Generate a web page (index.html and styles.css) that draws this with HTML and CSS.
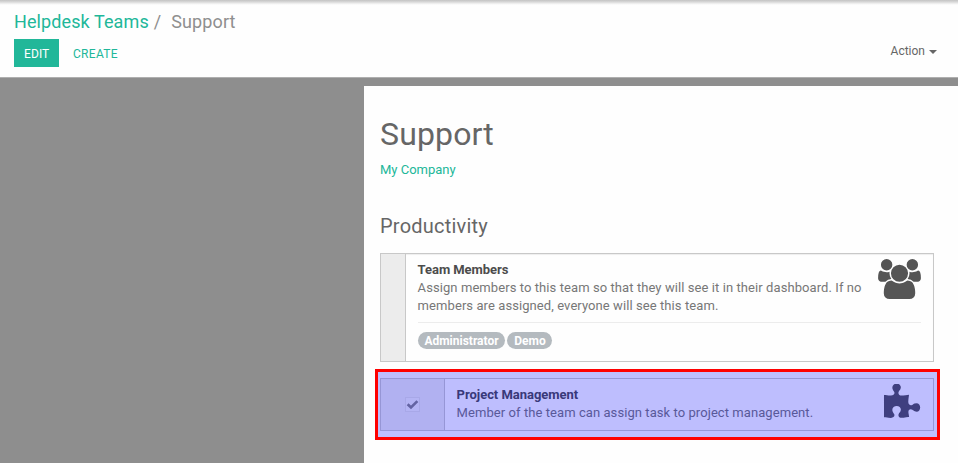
FILE: index.html
```html
<!DOCTYPE html>
<html lang="en">
<head>
<meta charset="utf-8">
<title>Support - Helpdesk Teams</title>
<link rel="stylesheet" href="styles.css">
</head>
<body>
<header class="control-panel">
  <nav class="breadcrumb"><a href="#">Helpdesk Teams</a><span class="sep">/</span><span>Support</span></nav>
  <div class="toolbar">
    <div class="buttons">
      <button class="btn btn-primary">EDIT</button>
      <button class="btn btn-link">CREATE</button>
    </div>
    <button class="action">Action<span class="caret"></span></button>
  </div>
</header>
<main class="content">
  <section class="sheet">
    <h1>Support</h1>
    <a class="company" href="#">My Company</a>
    <h2>Productivity</h2>
    <article class="setting setting-members">
      <div class="setting-left"></div>
      <div class="setting-right">
        <div class="setting-head">
          <div class="setting-text">
            <h3>Team Members</h3>
            <p>Assign members to this team so that they will see it in their dashboard. If no members are assigned, everyone will see this team.</p>
          </div>
          <svg class="icon-users" viewBox="0 0 1920 1792" aria-hidden="true"><path d="M593 896q-162 5-265 128h-134q-82 0-138-40.500t-56-118.500q0-353 124-353 6 0 43.500 21t97.500 42.500 119 21.500q67 0 133-23-5 37-5 66 0 139 81 256zm1071 637q0 120-73 189.500t-194 69.500h-874q-121 0-194-69.500t-73-189.500q0-53 3.500-103.500t14-109 26.500-108.500 43-97.500 62-81 85.500-53.500 111.500-20q10 0 43 21.500t73 48 107 48 135 21.500 135-21.500 107-48 73-48 43-21.500q61 0 111.500 20t85.500 53.500 62 81 43 97.500 26.500 108.500 14 109 3.500 103.500zm-1024-1277q0 106-75 181t-181 75-181-75-75-181 75-181 181-75 181 75 75 181zm704 384q0 159-112.500 271.500t-271.500 112.500-271.500-112.500-112.500-271.500 112.500-271.500 271.500-112.500 271.500 112.500 112.500 271.500zm576 225q0 78-56 118.500t-138 40.500h-134q-103-123-265-128 81-117 81-256 0-29-5-66 66 23 133 23 59 0 119-21.500t97.500-42.500 43.500-21q124 0 124 353zm-128-609q0 106-75 181t-181 75-181-75-75-181 75-181 181-75 181 75 75 181z"/></svg>
        </div>
        <div class="tags"><span class="tag">Administrator</span><span class="tag">Demo</span></div>
      </div>
    </article>
    <div class="highlight">
      <article class="setting setting-project">
        <div class="setting-left">
          <span class="checkbox"><svg viewBox="0 0 12 12" aria-hidden="true"><path d="M1.500 5.800 4.600 8.700 10.500 2.900"/></svg></span>
        </div>
        <div class="setting-right">
          <div class="setting-head">
            <div class="setting-text">
              <h3>Project Management</h3>
              <p>Member of the team can assign task to project management.</p>
            </div>
            <svg class="icon-puzzle" viewBox="0 0 1792 1792" aria-hidden="true"><path d="M1755 1083q0 81-44.500 135t-123.500 54q-41 0-77.500-17.500t-59-38-56.500-38-71-17.500q-110 0-110 124 0 39 16 115t15 115v5q-22 0-33 1-34 3-97.500 11.500t-115.500 13.500-98 5q-61 0-103-26.500t-42-83.500q0-37 17.500-71t38-56.500 38-59 17.500-77.500q0-79-54-123.500t-135-44.500q-84 0-143 45.500t-59 127.500q0 43 15 83t33.500 64.500 33.500 53 15 50.500q0 45-46 89-37 35-117 35-95 0-245-24-9-2-27.500-4t-27.500-4l-13-2q-1 0-3-1-2 0-2-1v-1024q2 1 17.500 3.500t34 5 21.500 3.500q150 24 245 24 80 0 117-35 46-44 46-89 0-22-15-50.500t-33.500-53-33.500-64.500-15-83q0-82 59-127.500t144-45.500q80 0 134 44.500t54 123.500q0 41-17.500 77.500t-38 59-38 56.500-17.500 71q0 57 42 83.500t103 26.500q64 0 180-15t163-17v2q-1 2-3.500 17.500t-5 34-3.500 21.500q-24 150-24 245 0 80 35 117 44 46 89 46 22 0 50.500-15t53-33.500 64.500-33.500 83-15q82 0 127.500 59t45.500 143z"/></svg>
          </div>
        </div>
      </article>
    </div>
  </section>
</main>
</body>
</html>
```
FILE: styles.css
```css
* { box-sizing: border-box; }
body {
  margin: 0;
  height: 463px;
  overflow: hidden;
  display: flex;
  flex-direction: column;
  background: #8e8e8e;
  color: #666;
  font: 13px/18px Roboto, "Liberation Sans", sans-serif;
}
h1, h2, h3, p { margin: 0; }
a { color: #21b799; text-decoration: none; }
button { font: inherit; border: 0; margin: 0; background: none; }

.control-panel {
  height: 78px;
  padding: 9px 21px 0 14px;
  background: linear-gradient(#c3c3c3 0, #d9d9d9 2px, #f5f5f5 4px, #fefefe 5px);
  border-bottom: 1px solid #afafaf;
}
.breadcrumb { font-size: 18px; line-height: 26px; letter-spacing: .1px; color: #8f8f8f; }
.sep { padding: 0 10px 0 5px; }
.toolbar { display: flex; justify-content: space-between; margin-top: 4px; }
.buttons { display: flex; }
.btn { height: 28px; padding: 2px 10px 0; font-size: 12px; line-height: 27px; }
.btn-primary { width: 45px; background: #21b799; color: #fff; letter-spacing: .1px; }
.btn-link { margin-left: 4px; color: #21b799; letter-spacing: .3px; }
.action { display: flex; align-items: center; height: 24px; padding: 0; color: #666; font-size: 12px; }
.caret {
  margin: 2px 0 0 4px;
  border: 4px solid transparent;
  border-top-color: #666;
  border-bottom: 0;
}

.content { flex: 1; padding: 8px 0 0 364px; }
.sheet { height: 100%; padding: 30px 24px 0 16px; background: #fefefe; }
h1 { font-size: 32px; line-height: 36px; font-weight: 400; letter-spacing: .15px; }
.company { display: block; margin-top: 9px; }
h2 { margin: 35px 0 15px; font-size: 20px; line-height: 24px; font-weight: 400; letter-spacing: .22px; }

.setting { display: flex; border: 1px solid #c8c8c8; }
.setting-members { box-shadow: inset 0 1px 1px #eee; }
.setting-left { flex: none; width: 25px; background: #ececec; border-right: 1px solid #c8c8c8; }
.setting-right { flex: 1; padding: 6px 12px 0 11.600px; }
.setting-head { display: flex; justify-content: space-between; }
.setting-text { padding-top: 1px; color: #777; letter-spacing: .08px; }
h3 { font-size: 13px; line-height: 18px; font-weight: 700; letter-spacing: -.05px; color: #4c4c4c; }
svg { display: block; flex: none; fill: #555; }
.setting-members { height: 109px; }
.setting-members .setting-text { width: 450px; }
.icon-users { width: 43px; height: 40px; margin-top: -1px; }
.tags { display: flex; gap: 2px; margin-top: 7px; padding-top: 9px; border-top: 1px solid #ececec; }
.tag {
  height: 17px;
  padding: 0 6.800px;
  border-radius: 9px;
  background: #b4babf;
  color: #fff;
  font-size: 12px;
  line-height: 18px;
  font-weight: 700;
}

.highlight {
  position: relative;
  margin: 7px -6px 0 -5px;
  height: 71px;
  padding: 9px 6px 0 5px;
}
.highlight::after {
  content: "";
  position: absolute;
  inset: 0;
  border: 3px solid #f00;
  background: rgba(0, 0, 255, .25);
  background-clip: padding-box;
}
.setting-project { height: 53px; }
.setting-project .setting-text { letter-spacing: .07px; }
.setting-project h3 { letter-spacing: -.03px; }
.setting-project .setting-left { display: flex; width: 64px; align-items: center; justify-content: center; }
.checkbox { width: 15px; height: 15px; border: 1px solid #e0e0e0; background: #f1f1f1; }
.checkbox svg { width: 13px; height: 13px; fill: none; stroke: #858585; stroke-width: 2.500; }
.icon-puzzle { width: 39px; height: 39px; margin-top: -1px; }
```
